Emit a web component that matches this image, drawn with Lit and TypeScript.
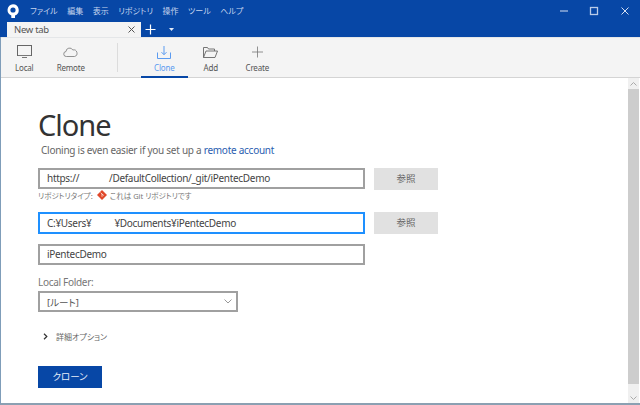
import { LitElement, html, css } from "lit";
import { customElement } from "lit/decorators.js";

const MENU = ["ファイル", "編集", "表示", "リポジトリ", "操作", "ツール", "ヘルプ"];

@customElement("app-root")
export class AppRoot extends LitElement {
  static styles = css`
    :host {
      display: block;
      width: 640px;
      height: 405px;
      overflow: hidden;
      font-family: "Noto Sans", "Noto Sans CJK JP", sans-serif;
      font-feature-settings: "palt";
      color: #444;
      background: #fff;
    }
    svg {
      display: block;
    }
    .window {
      display: flex;
      flex-direction: column;
      height: 405px;
      box-sizing: border-box;
      border-left: 1px solid #7f9db9;
      border-bottom: 2px solid #8ba0b2;
    }

    /* title bar */
    .titlebar {
      display: flex;
      align-items: center;
      height: 22px;
      background: #0747a6;
      padding-left: 7px;
      margin-left: -1px;
    }
    .logo {
      width: 12px;
      height: 14px;
      margin-right: 11px;
      margin-top: -1px;
    }
    .menu {
      display: flex;
      gap: 9.5px;
      flex: 1;
      font-size: 8px;
      color: #c6d6ee;
      margin-top: -1px;
    }
    .win-btns {
      display: flex;
    }
    .win-btns div {
      width: 30.5px;
      height: 22px;
      display: flex;
      align-items: center;
      justify-content: center;
    }

    /* tab strip */
    .tabs {
      display: flex;
      align-items: stretch;
      height: 15px;
      background: #0747a6;
      margin-left: -1px;
      padding-left: 7px;
    }
    .tab {
      display: flex;
      align-items: center;
      justify-content: space-between;
      box-sizing: border-box;
      width: 134px;
      padding: 0 5px 0 7px;
      background: #f4f4f4;
      font-size: 9.5px;
      letter-spacing: -0.3px;
      color: #555;
    }
    .tab-add {
      display: flex;
      align-items: center;
      gap: 13px;
      padding-left: 4px;
    }

    /* toolbar */
    .toolbar {
      display: flex;
      height: 41px;
      box-sizing: border-box;
      background: #f4f4f4;
      border-top: 1px solid #e4e6e8;
      border-bottom: 1px solid #d4d4d4;
    }
    .tool {
      width: 46.5px;
      display: flex;
      flex-direction: column;
      align-items: center;
      font-size: 8px;
      letter-spacing: -0.2px;
      color: #555;
      box-sizing: border-box;
      height: 40px;
      padding-top: 7px;
      gap: 2px;
      white-space: nowrap;
    }
    .tool svg {
      height: 15px;
    }
    .tool.active {
      color: #5b9bf0;
      border-bottom: 2px solid #0747a6;
    }
    .tool-group {
      display: flex;
    }
    .sep {
      width: 1px;
      height: 29px;
      margin: 5px 23px 0 23px;
      background: #dcdcdc;
    }

    /* body */
    .body {
      flex: 1;
      display: flex;
      min-height: 0;
    }
    .content {
      flex: 1;
      padding: 29px 0 0 37px;
    }
    h1 {
      margin: 0;
      font-size: 29px;
      line-height: 36px;
      font-weight: 400;
      letter-spacing: -1px;
      color: #333;
    }
    .subtitle {
      margin: 0 0 11px 3px;
      font-size: 10px;
      letter-spacing: -0.26px;
      line-height: 14px;
      color: #666;
    }
    .subtitle a {
      color: #2a5db0;
      text-decoration: none;
    }
    .row {
      display: flex;
      gap: 9px;
      align-items: flex-start;
    }
    .field {
      box-sizing: border-box;
      width: 327px;
      height: 21px;
      border: 2px solid #a0a0a0;
      padding-left: 7px;
      font-size: 10px;
      letter-spacing: -0.3px;
      line-height: 17px;
      color: #444;
      white-space: pre;
    }
    .field.focus {
      border-color: #1e90ff;
      height: 22px;
      line-height: 18px;
    }
    .browse {
      width: 64px;
      height: 22px;
      background: #e1e1e1;
      font-size: 9.5px;
      line-height: 22px;
      text-align: center;
      color: #666;
    }
    .repo-type {
      display: flex;
      align-items: center;
      height: 10px;
      margin: 0 0 12px 0;
      font-size: 7.5px;
      color: #777;
    }
    .repo-type svg {
      margin: 0 3px 0 4px;
    }
    .third {
      margin-top: 10px;
    }
    .label {
      margin-top: 9px;
      font-size: 10px;
      letter-spacing: -0.3px;
      line-height: 17px;
      color: #777;
    }
    .select {
      box-sizing: border-box;
      width: 200px;
      height: 21px;
      border: 2px solid #a0a0a0;
      padding: 0 4px 0 7px;
      display: flex;
      align-items: center;
      justify-content: space-between;
      font-size: 9.5px;
      color: #555;
    }
    .advanced {
      display: flex;
      align-items: center;
      gap: 8px;
      margin: 18px 0 0 5px;
      height: 12px;
      font-size: 8px;
      color: #666;
    }
    .clone-btn {
      width: 64px;
      height: 22px;
      margin-top: 24px;
      background: #0747a6;
      color: #e6eefa;
      font-size: 9.5px;
      line-height: 22px;
      text-align: center;
    }

    /* scrollbar */
    .scrollbar {
      width: 11px;
      margin-right: 1px;
      display: flex;
      flex-direction: column;
      background: #f0f0f0;
    }
    .scrollbar .arrow {
      height: 11px;
      display: flex;
      align-items: center;
      justify-content: center;
    }
    .scrollbar .arrow.down {
      height: 19px;
      align-items: flex-end;
      padding-bottom: 3px;
      box-sizing: border-box;
    }
    .scrollbar .thumb {
      flex: 1;
      background: #cdcdcd;
    }
  `;

  render() {
    return html`
      <div class="window">
        <div class="titlebar">
          <svg class="logo" viewBox="0 0 12 14">
            <path d="M6 .2a5.8 5.8 0 0 1 2 11.2V14H4.3v-2.6A5.8 5.8 0 0 1 6 .2z" fill="#fff" />
            <circle cx="6" cy="6" r="2.6" fill="#0747a6" />
          </svg>
          <div class="menu">${MENU.map((m) => html`<span>${m}</span>`)}</div>
          <div class="win-btns">
            <div>
              <svg width="10" height="10" viewBox="0 0 10 10"><path d="M1 5h8" stroke="#d5e0f2" stroke-width="1" /></svg>
            </div>
            <div>
              <svg width="10" height="10" viewBox="0 0 10 10">
                <rect x="1.5" y="1.5" width="7" height="7" fill="none" stroke="#b9cbe8" stroke-width="1.3" />
              </svg>
            </div>
            <div>
              <svg width="10" height="10" viewBox="0 0 10 10"><path d="M1.5 1.5l7 7M8.5 1.5l-7 7" stroke="#d5e0f2" stroke-width="1" /></svg>
            </div>
          </div>
        </div>

        <div class="tabs">
          <div class="tab">
            New tab
            <svg width="9" height="9" viewBox="0 0 9 9"><path d="M1.5 1.5l6 6M7.5 1.5l-6 6" stroke="#555" stroke-width="1" /></svg>
          </div>
          <div class="tab-add">
            <svg width="11" height="11" viewBox="0 0 11 11"><path d="M5.5 .5v10M.5 5.5h10" stroke="#fff" stroke-width="1.2" /></svg>
            <svg width="5" height="3" viewBox="0 0 5 3"><path d="M0 0h5L2.5 3z" fill="#e3ebf7" /></svg>
          </div>
        </div>

        <div class="toolbar">
          <div class="tool-group">
            <div class="tool">
              <svg width="15" height="15" viewBox="0 0 15 15">
                <rect x=".5" y=".5" width="14" height="10" fill="none" stroke="#666" />
                <path d="M1 10h13v1H1z" fill="#777" />
                <path d="M5 12.5h5" stroke="#777" />
              </svg>
              Local
            </div>
            <div class="tool">
              <svg width="15" height="15" viewBox="0 0 15 15">
                <path d="M3.5 11.5a2.5 2.5 0 0 1-.5-5A3.6 3.6 0 0 1 9.8 5 2.9 2.9 0 0 1 11.5 11.5z" fill="none" stroke="#777" stroke-width=".8" />
              </svg>
              Remote
            </div>
          </div>
          <div class="sep"></div>
          <div class="tool-group">
            <div class="tool active">
              <svg width="15" height="15" viewBox="0 0 15 15">
                <path d="M.5 7.5v6h13v-6" fill="none" stroke="#5b9bf0" />
                <path d="M7 1v8.5M4.5 7.2L7 9.7l2.5-2.5" fill="none" stroke="#5b9bf0" />
              </svg>
              Clone
            </div>
            <div class="tool">
              <svg width="15" height="15" viewBox="0 0 15 15">
                <path d="M.5 12.5v-10h4l1 1.5h6v2M.5 12.5L3 6h11.5l-2.5 6.5z" fill="none" stroke="#666" stroke-width=".9" />
              </svg>
              Add
            </div>
            <div class="tool">
              <svg width="15" height="15" viewBox="0 0 15 15"><path d="M7.5 1.5v11M2 7h11" stroke="#777" stroke-width=".8" /></svg>
              Create
            </div>
          </div>
        </div>

        <div class="body">
          <div class="content">
            <h1>Clone</h1>
            <p class="subtitle">Cloning is even easier if you set up a <a>remote account</a></p>
            <div class="row">
              <div class="field">https://             /DefaultCollection/_git/iPentecDemo</div>
              <div class="browse">参照</div>
            </div>
            <div class="repo-type">
              リポジトリタイプ:
              <svg width="10" height="10" viewBox="0 0 10 10">
                <path d="M5 0l5 5-5 5-5-5z" fill="#e0492c" />
                <path d="M3.6 2.6L5 4v2.8M5 4l1.8 1.5" stroke="#fff" stroke-width=".7" fill="none" />
              </svg>
              これは Git リポジトリです
            </div>
            <div class="row">
              <div class="field focus">C:¥Users¥          ¥Documents¥iPentecDemo</div>
              <div class="browse">参照</div>
            </div>
            <div class="field third">iPentecDemo</div>
            <div class="label">Local Folder:</div>
            <div class="select">
              [ルート]
              <svg width="8" height="5" viewBox="0 0 8 5"><path d="M.5 .5L4 4 7.5 .5" fill="none" stroke="#999" /></svg>
            </div>
            <div class="advanced">
              <svg width="5" height="7" viewBox="0 0 5 7"><path d="M1 .8L3.8 3.5 1 6.2" fill="none" stroke="#333" stroke-width="1.2" /></svg>
              詳細オプション
            </div>
            <div class="clone-btn">クローン</div>
          </div>
          <div class="scrollbar">
            <div class="arrow">
              <svg width="7" height="4" viewBox="0 0 7 4"><path d="M.5 3.5l3-3 3 3" fill="none" stroke="#aaa" /></svg>
            </div>
            <div class="thumb"></div>
            <div class="arrow down">
              <svg width="7" height="4" viewBox="0 0 7 4"><path d="M.5 .5l3 3 3-3" fill="none" stroke="#aaa" /></svg>
            </div>
          </div>
        </div>
      </div>
    `;
  }
}
